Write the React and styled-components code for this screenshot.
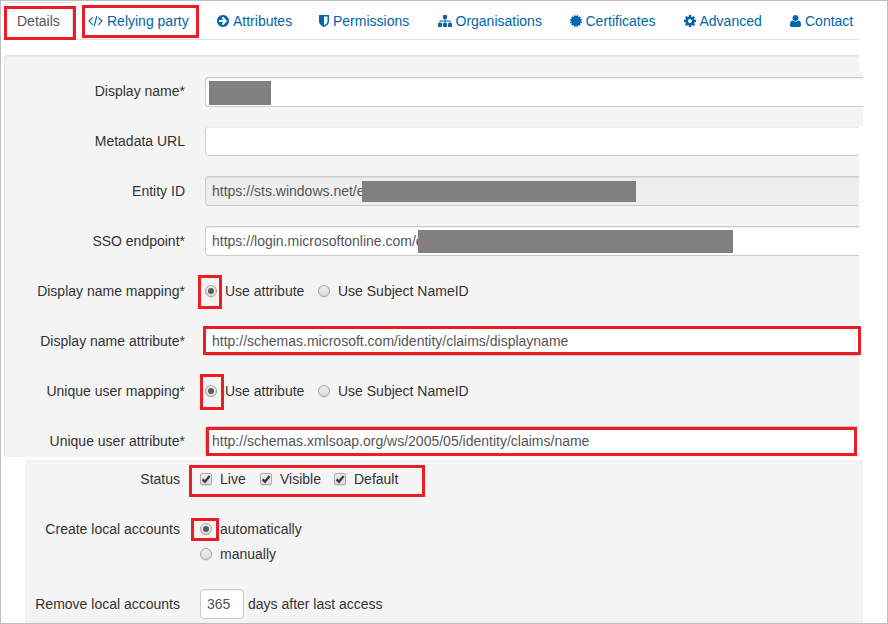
import React from "react";
import styled, { createGlobalStyle } from "styled-components";

const GlobalStyle = createGlobalStyle`
  *, *::before, *::after { box-sizing: border-box; }
  body {
    margin: 0;
    background: #fff;
    font-family: "Liberation Sans", Arial, sans-serif;
    font-size: 14px;
    line-height: 20px;
    color: #333;
  }
`;

const Frame = styled.main`
  position: relative;
  display: flex;
  flex-direction: column;
  width: 888px;
  height: 624px;
  border: 1px solid #bfbfbf;
  overflow: hidden;
`;

const TabBar = styled.nav`
  display: flex;
  flex: none;
  width: 855px;
  height: 38px;
  margin: 1px 0 15px 3px;
  border-bottom: 1px solid #ddd;
`;

const Tab = styled.a`
  display: flex;
  flex: none;
  align-items: center;
  gap: 4px;
  width: ${(p) => p.$width}px;
  height: 38px;
  margin-right: 2px;
  padding: 0 0 1px 12px;
  border: 1px solid ${(p) => (p.$active ? "#ddd" : "transparent")};
  border-bottom-color: ${(p) => (p.$active ? "#fff" : "transparent")};
  border-radius: 4px 4px 0 0;
  color: ${(p) => (p.$active ? "#555" : "#0066ad")};
  white-space: nowrap;
`;

const Icon = styled.svg`
  flex: none;
  height: 14px;
  width: ${(p) => p.$width}px;
  fill: #0066ad;
`;

const Panel = styled.section`
  flex: none;
  width: 855px;
  height: 402px;
  margin-left: 3px;
  padding-top: 16px;
  background: #f4f4f4;
  border: solid #e0e0e0;
  border-width: 1px 0 0 1px;
  border-radius: 4px 0 0 0;
  box-shadow: inset 0 1px 1px rgba(0, 0, 0, 0.05);
`;

const LowerPanel = styled.section`
  flex: none;
  width: 838px;
  height: 163px;
  margin: 3px 0 0 24px;
  padding-top: 4px;
  background: #f4f4f4;
`;

const Row = styled.div`
  display: flex;
  height: 50px;
  padding-top: 10px;
`;

const WideRow = styled(Row)`
  width: 858px;
  height: 55px;
  padding-top: 4px;
  background: #f4f4f4;
`;

const ClippedRow = styled(Row)`
  height: 39px;
  padding-top: 0;
`;

const LowerRow = styled(Row)`
  padding-top: 0;
  height: ${(p) => p.$height || 50}px;
`;

const Label = styled.label`
  flex: none;
  width: ${(p) => p.$width || 180}px;
  margin-right: 20px;
  margin-top: ${(p) => p.$shift || 0}px;
  line-height: 30px;
  text-align: right;
  white-space: nowrap;
`;

const Field = styled.div`
  position: relative;
  flex: 1;
  height: 30px;
  margin-top: ${(p) => p.$shift || 0}px;
  padding-left: 6px;
  line-height: 28px;
  color: #555;
  background: ${(p) => (p.$disabled ? "#eee" : "#fff")};
  border: 1px solid #ccc;
  border-right: 0;
  border-radius: 4px 0 0 4px;
  box-shadow: inset 0 1px 1px rgba(0, 0, 0, 0.075);
  white-space: nowrap;
`;

const ClippedField = styled(Field)`
  height: 29px;
  border-top: 0;
`;

const DaysField = styled(Field)`
  flex: none;
  width: 44px;
  margin-right: 4px;
  border: 1px solid #ccc;
  border-radius: 4px;
`;

const Redaction = styled.span`
  position: absolute;
  left: ${(p) => p.$x}px;
  top: ${(p) => p.$y}px;
  width: ${(p) => p.$w}px;
  height: ${(p) => p.$h}px;
  background: #808080;
`;

const Option = styled.span`
  display: flex;
  align-items: center;
  gap: ${(p) => p.$gap || 8}px;
  height: 30px;
  width: ${(p) => p.$width || "auto"};
  white-space: nowrap;
`;

const Radio = styled.span`
  display: flex;
  align-items: center;
  justify-content: center;
  width: 12px;
  height: 12px;
  border: 1px solid #a5a5a5;
  border-radius: 50%;
  background: linear-gradient(#ededed, #dcdcdc);
  box-shadow: 0 1px 1px rgba(0, 0, 0, 0.08);

  &::after {
    content: "";
    width: 6px;
    height: 6px;
    border-radius: 50%;
    background: ${(p) => (p.$checked ? "#5c5c5c" : "transparent")};
  }
`;

const CheckBox = styled.span`
  display: flex;
  width: 12px;
  height: 12px;
  border: 1px solid #acacac;
  border-radius: 2px;
  background: linear-gradient(#ededed, #dcdcdc);
  box-shadow: 0 1px 1px rgba(0, 0, 0, 0.08);
`;

const Stack = styled.div`
  display: flex;
  flex-direction: column;
  gap: 0;
`;

const LowOption = styled(Option)`
  margin-top: -5px;
`;

const Suffix = styled.span`
  line-height: 30px;
`;

const Highlight = styled.span`
  position: absolute;
  left: ${(p) => p.$box[0] - 1}px;
  top: ${(p) => p.$box[1] - 1}px;
  width: ${(p) => p.$box[2] - p.$box[0]}px;
  height: ${(p) => p.$box[3] - p.$box[1]}px;
  border: 3px solid #ee1c25;
  pointer-events: none;
`;

const icons = {
  arrow: { w: 12, box: "128 0 1536 1792", d: "M1413 896q0-27-18-45l-91-91-362-362q-18-18-45-18t-45 18l-91 91q-18 18-18 45t18 45l189 189h-502q-26 0-45 19t-19 45v128q0 26 19 45t45 19h502l-189 189q-19 19-19 45t19 45l91 91q18 18 45 18t45-18l362-362 91-91q18-18 18-45zm251 0q0 209-103 385.5t-279.5 279.5-385.5 103-385.5-103-279.5-279.5-103-385.5 103-385.5 279.5-279.5 385.5-103 385.5 103 279.5 279.5 103 385.5z" },
  shield: { w: 10, box: "256 0 1280 1792", d: "M1344 960v-640h-448v1137q119-63 213-137 235-184 235-360zm192-768v768q0 86-33.5 170.5t-83 150-118 127.5-126.5 103-121 77.5-89.5 49.5-42.5 20q-12 6-26 6t-26-6q-16-7-42.5-20t-89.5-49.5-121-77.5-126.5-103-118-127.5-83-150-33.5-170.5v-768q0-26 19-45t45-19h1152q26 0 45 19t19 45z" },
  sitemap: { w: 14, box: "0 0 1792 1792", d: "M1792 1248v320q0 40-28 68t-68 28h-320q-40 0-68-28t-28-68v-320q0-40 28-68t68-28h96v-192h-512v192h96q40 0 68 28t28 68v320q0 40-28 68t-68 28h-320q-40 0-68-28t-28-68v-320q0-40 28-68t68-28h96v-192h-512v192h96q40 0 68 28t28 68v320q0 40-28 68t-68 28h-320q-40 0-68-28t-28-68v-320q0-40 28-68t68-28h96v-192q0-52 38-90t90-38h512v-192h-96q-40 0-68-28t-28-68v-320q0-40 28-68t68-28h320q40 0 68 28t28 68v320q0 40-28 68t-68 28h-96v192h512q52 0 90 38t38 90v192h96q40 0 68 28t28 68z" },
  certificate: { w: 12, box: "128 0 1536 1792", d: "M1504 896l138 135q30 28 20 70-12 41-52 51l-188 48 53 186q12 41-19 70-29 31-70 19l-186-53-48 188q-10 40-51 52-12 2-19 2-31 0-51-22l-135-138-135 138q-28 30-70 20-41-11-51-52l-48-188-186 53q-41 12-70-19-31-29-19-70l53-186-188-48q-40-10-52-51-10-42 20-70l138-135-138-135q-30-28-20-70 12-41 52-51l188-48-53-186q-12-41 19-70 29-31 70-19l186 53 48-188q10-41 51-51 41-12 70 19l135 139 135-139q29-30 70-19 41 10 51 51l48 188 186-53q41-12 70 19 31 29 19 70l-53 186 188 48q40 10 52 51 10 42-20 70z" },
  cog: { w: 12, box: "128 0 1536 1792", d: "M1152 896q0-106-75-181t-181-75-181 75-75 181 75 181 181 75 181-75 75-181zm512-109v222q0 12-8 23t-20 13l-185 28q-19 54-39 91 35 50 107 138 10 12 10 25t-9 23q-27 37-99 108t-94 71q-12 0-26-9l-138-108q-44 23-91 38-16 136-29 186-7 28-36 28h-222q-14 0-24.5-8.5t-11.5-21.5l-28-184q-49-16-90-37l-141 107q-10 9-25 9-14 0-25-11-126-114-165-168-7-10-7-23 0-12 8-23 15-21 51-66.5t54-70.5q-27-50-41-99l-183-27q-13-2-21-12.5t-8-23.5v-222q0-12 8-23t19-13l186-28q14-46 39-92-40-57-107-138-10-12-10-24 0-10 9-23 26-36 98.5-107.5t94.5-71.5q13 0 26 10l138 107q44-23 91-38 16-136 29-186 7-28 36-28h222q14 0 24.5 8.5t11.5 21.5l28 184q49 16 90 37l142-107q9-9 24-9 13 0 25 10 129 119 165 170 7 8 7 22 0 12-8 23-15 21-51 66.5t-54 70.5q26 50 41 98l183 28q13 2 21 12.5t8 23.5z" },
  user: { w: 11, box: "192 0 1408 1792", d: "M1600 1405q0 120-73 189.500t-194 69.500h-874q-121 0-194-69.500t-73-189.500q0-53 3.500-103.500t14-109 26.500-108.500 43-97.500 62-81 85.500-53.500 111.500-20q9 0 42 21.500t74.500 48 108 48 133.500 21.500 133.500-21.500 108-48 74.500-48 42-21.500q61 0 111.500 20t85.500 53.500 62 81 43 97.500 26.500 108.500 14 109 3.500 103.500zm-320-893q0 159-112.500 271.500t-271.500 112.500-271.500-112.500-112.500-271.500 112.500-271.500 271.500-112.500 271.500 112.500 112.500 271.500z" },
};

const CodeGlyph = styled.svg`
  flex: none;
  width: 15px;
  height: 14px;
  fill: none;
  stroke: #0066ad;
  stroke-width: 1.15;
`;

function TabIcon({ name }) {
  if (name === "code") {
    return (
      <CodeGlyph viewBox="0 0 15 14">
        <path d="M4.7 3.4 1 7.1l3.700 3.700M10.300 3.400 14 7.100l-3.700 3.700M8.800 2 6.200 12.400" />
      </CodeGlyph>
    );
  }
  const icon = icons[name];
  return (
    <Icon $width={icon.w} viewBox={icon.box}>
      <path d={icon.d} />
    </Icon>
  );
}

const tabs = [
  { text: "Details", width: 69 },
  { text: "Relying party", icon: "code", width: 127 },
  { text: "Attributes", icon: "arrow", width: 100 },
  { text: "Permissions", icon: "shield", width: 116.500 },
  { text: "Organisations", icon: "sitemap", width: 130 },
  { text: "Certificates", icon: "certificate", width: 112 },
  { text: "Advanced", icon: "cog", width: 104.500 },
  { text: "Contact", icon: "user", width: 80 },
];

const highlights = [
  [4, 6, 76, 40],
  [82, 5, 199, 38],
  [198, 275, 222, 309],
  [203, 326, 861, 355],
  [200, 374, 224, 410],
  [206, 427, 857, 456],
  [189, 465, 425, 497],
  [191, 518, 219, 541],
];

function MappingRow({ label }) {
  return (
    <Row>
      <Label>{label}</Label>
      <Option $width="113px"><Radio $checked />Use attribute</Option>
      <Option><Radio />Use Subject NameID</Option>
    </Row>
  );
}

function CheckOption({ text, width }) {
  return (
    <Option $width={width}>
      <CheckBox>
        <svg width="10" height="10" viewBox="0 0 10 10">
          <path d="M1.500 5.300 4 7.700 8.600 2" fill="none" stroke="#3d3d3d" strokeWidth="2.300" />
        </svg>
      </CheckBox>
      {text}
    </Option>
  );
}

export default function App() {
  return (
    <>
      <GlobalStyle />
      <Frame>
        <TabBar>
          {tabs.map((t) => (
            <Tab key={t.text} $active={!t.icon} $width={t.width}>
              {t.icon && <TabIcon name={t.icon} />}
              {t.text}
            </Tab>
          ))}
        </TabBar>
        <Panel>
          <WideRow>
            <Label>Display name*</Label>
            <Field $shift={1}><Redaction $x={3} $y={3} $w={62} $h={24} /></Field>
          </WideRow>
          <ClippedRow>
            <Label $shift={-1}>Metadata URL</Label>
            <ClippedField />
          </ClippedRow>
          <Row>
            <Label>Entity ID</Label>
            <Field $disabled>https://sts.windows.net/e<Redaction $x={156} $y={4} $w={274} $h={21} /></Field>
          </Row>
          <Row>
            <Label>SSO endpoint*</Label>
            <Field>https://login.microsoftonline.com/e<Redaction $x={212} $y={3} $w={315} $h={23} /></Field>
          </Row>
          <MappingRow label="Display name mapping*" />
          <Row>
            <Label>Display name attribute*</Label>
            <Field>http://schemas.microsoft.com/identity/claims/displayname</Field>
          </Row>
          <MappingRow label="Unique user mapping*" />
          <Row>
            <Label>Unique user attribute*</Label>
            <Field>http://schemas.xmlsoap.org/ws/2005/05/identity/claims/name</Field>
          </Row>
        </Panel>
        <LowerPanel>
          <LowerRow>
            <Label $width={155}>Status</Label>
            <CheckOption text="Live" width="60px" />
            <CheckOption text="Visible" width="74px" />
            <CheckOption text="Default" />
          </LowerRow>
          <LowerRow $height={75}>
            <Label $width={155}>Create local accounts</Label>
            <Stack>
              <Option><Radio $checked />automatically</Option>
              <LowOption><Radio />manually</LowOption>
            </Stack>
          </LowerRow>
          <LowerRow $height={34}>
            <Label $width={155}>Remove local accounts</Label>
            <DaysField>365</DaysField>
            <Suffix>days after last access</Suffix>
          </LowerRow>
        </LowerPanel>
        {highlights.map((box) => (
          <Highlight key={box.join("-")} $box={box} />
        ))}
      </Frame>
    </>
  );
}
